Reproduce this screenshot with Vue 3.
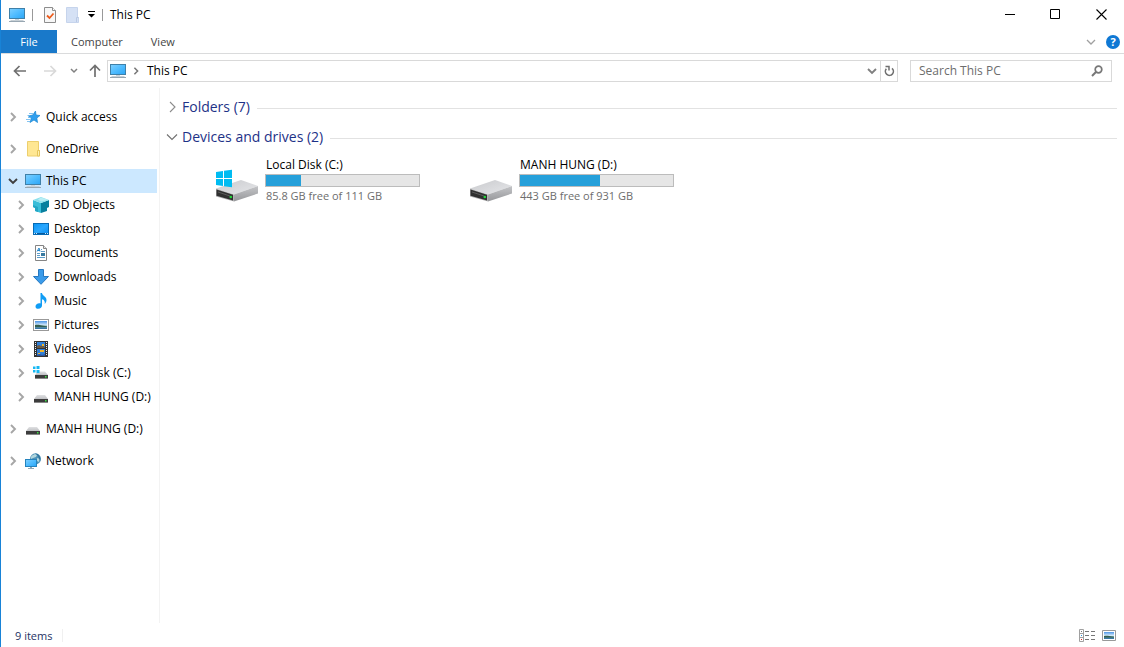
<script setup>
import { ref } from 'vue'

const query = ref('')

const tree = [
  { name: 'Quick access', icon: 'star', group: true },
  { name: 'OneDrive', icon: 'folder', group: true },
  { name: 'This PC', icon: 'pc', group: true, open: true },
  { name: '3D Objects', icon: 'cube', child: true },
  { name: 'Desktop', icon: 'desktop', child: true },
  { name: 'Documents', icon: 'document', child: true },
  { name: 'Downloads', icon: 'download', child: true },
  { name: 'Music', icon: 'music', child: true },
  { name: 'Pictures', icon: 'picture', child: true },
  { name: 'Videos', icon: 'video', child: true },
  { name: 'Local Disk (C:)', icon: 'disk-win', child: true },
  { name: 'MANH HUNG (D:)', icon: 'disk', child: true },
  { name: 'MANH HUNG (D:)', icon: 'disk', group: true },
  { name: 'Network', icon: 'network', group: true },
]

const drives = [
  { name: 'Local Disk (C:)', used: 23, note: '85.8 GB free of 111 GB', windows: true },
  { name: 'MANH HUNG (D:)', used: 52, note: '443 GB free of 931 GB', windows: false },
]
</script>

<template>
  <div class="window">
    <svg class="sprite" aria-hidden="true">
      <defs>
        <linearGradient id="g-screen" x1="0" y1="0" x2="1" y2="1">
          <stop offset="0" stop-color="#7fd0ff" /><stop offset=".5" stop-color="#4fbcff" /><stop offset="1" stop-color="#2ba5f5" />
        </linearGradient>
        <linearGradient id="g-desk" x1="0" y1="0" x2="1" y2="1">
          <stop offset="0" stop-color="#0a95f5" /><stop offset=".5" stop-color="#2ba8ff" /><stop offset="1" stop-color="#0a8df0" />
        </linearGradient>
        <linearGradient id="g-top" x1="0" y1="0" x2="1" y2="1">
          <stop offset="0" stop-color="#c9cacd" /><stop offset="1" stop-color="#e6e7ea" />
        </linearGradient>
        <linearGradient id="g-side" x1="0" y1="0" x2="0" y2="1">
          <stop offset="0" stop-color="#c4c5c8" /><stop offset="1" stop-color="#96979a" />
        </linearGradient>
        <linearGradient id="g-sky" x1="0" y1="0" x2="0" y2="1">
          <stop offset="0" stop-color="#4a94e6" /><stop offset=".5" stop-color="#d4e9fa" /><stop offset=".65" stop-color="#6f9c9a" /><stop offset="1" stop-color="#2d6fa8" />
        </linearGradient>
        <linearGradient id="g-disk" x1="0" y1="0" x2="0" y2="1">
          <stop offset="0" stop-color="#e0e1e3" /><stop offset="1" stop-color="#bfc0c3" />
        </linearGradient>
      </defs>
      <symbol id="i-pc" viewBox="0 0 16 16">
        <rect x=".5" y="1.5" width="15" height="10" fill="url(#g-screen)" stroke="#3f80a8" />
        <path d="M6 12h4v1H6z" fill="#c5d3dc" />
        <path d="M2 13h12l2 2H0z" fill="#c7d0d6" /><path d="M0 14.5h16" stroke="#98a7b2" />
      </symbol>
      <symbol id="i-star" viewBox="0 0 16 16">
        <path d="M10.500 2 11 6 15 6.500 11.800 9 12.500 13.500 9 11 5 13.500 6.300 9.500 3.500 7 7.800 6Z" fill="#2f9fee" stroke="#1784d0" stroke-width=".7" />
        <path d="M4 4.500h4M2.500 6.500H5M3 8.500H6M1 10.500h4.500M2 12.500h3" stroke="#64b5ed" stroke-width=".8" />
      </symbol>
      <symbol id="i-folder" viewBox="0 0 16 16">
        <path d="M2.500.5h11v9h1v5.500h-12z" fill="#ffe793" stroke="#edcf6d" />
        <path d="M12.500 15V9.500h2v5.500z" fill="#fff0b1" stroke="#e5c55c" />
      </symbol>
      <symbol id="i-cube" viewBox="0 0 16 16">
        <path d="M0 3 8 6v10L2 14V11L0 10z" fill="#39bdd8" />
        <path d="M8 6l8-3v7l-2 1v3L8 16z" fill="#087f9e" />
        <path d="M0 3 8 0l8 3-8 3z" fill="#8be0ed" />
        <path d="M5 2.500 8 4.500 15.500 3 8 .5z" fill="#b8edf4" />
        <path d="M2 14l3 1v-5L0 8v2l2 1z" fill="#22a6c4" />
      </symbol>
      <symbol id="i-desktop" viewBox="0 0 16 16">
        <rect x=".5" y="2.500" width="15" height="11" fill="url(#g-desk)" stroke="#076bb5" />
        <path d="M1 12.500h14" stroke="#075a9c" /><path d="M1 12.500h1M3 12.500h1M12 12.500h1M14 12.500h1" stroke="#cbeaff" />
      </symbol>
      <symbol id="i-document" viewBox="0 0 16 16">
        <path d="M2.500.5h8l3 3v12h-11z" fill="#fff" stroke="#858585" /><path d="M10.500.5v3h3" fill="#e8e8e8" stroke="#858585" />
        <path d="M4 6.500 6 3 7 6.500M5 5.500h2" fill="none" stroke="#2688cd" />
        <path d="M8 4.500h1M8 6.500h4M4 8.500h3M4 10.500h3M4 12.500h8" fill="none" stroke="#5d9cc8" />
        <path d="M8 8h4v3H8z" fill="#397aa0" />
      </symbol>
      <symbol id="i-download" viewBox="0 0 16 16">
        <path d="M5.500.5h5v7h5L8 15.300.5 7.500h5z" fill="#3a9bea" stroke="#2678c0" />
      </symbol>
      <symbol id="i-music" viewBox="0 0 16 16">
        <path d="M7.500 0H9c.2 2.500 4.500 3.500 4.500 7 0 1.700-.8 3-1.800 4 .5-2.500-.4-4.300-2.700-4.800V12.500c0 1.900-1.400 3.300-3.800 3.300C3.500 15.800 2.500 14.900 2.500 13.500c0-1.700 1.700-3.200 3.800-3.200.5 0 .9.100 1.200.2z" fill="#109df5" />
      </symbol>
      <symbol id="i-picture" viewBox="0 0 16 16">
        <rect x=".5" y="2.500" width="15" height="11" fill="#fff" stroke="#999" />
        <rect x="2" y="4" width="12" height="8" fill="url(#g-sky)" />
        <path d="M2 8c3-.5 5 0 12 1.500V10H2z" fill="#335f50" />
      </symbol>
      <symbol id="i-video" viewBox="0 0 16 16">
        <path d="M1 0h14v16H1z" fill="#333" />
        <path d="M2.500 1v14M13.500 1v14" stroke="#eee" stroke-width="1" stroke-dasharray="1 1" />
        <path d="M4 1h8v6H4zM4 8h8v7H4z" fill="#2f7fd8" />
        <path d="M4 5 6 4 8 5 10 4 12 6v1H4z" fill="#6b5a45" /><path d="M9 3h2v2H9zM7 9h4v2H7zM5 12h2v1H5z" fill="#efb52e" /><path d="M4 14l3-1 2 1 3-1v2H4z" fill="#2e569d" />
      </symbol>
      <symbol id="i-disk" viewBox="0 0 16 16">
        <path d="M4 6h8l3 4H1z" fill="url(#g-disk)" />
        <path d="M1 10h14v4H1z" fill="#3c3c3c" /><path d="M1 13.500h14" stroke="#888" /><path d="M12 11h1.500v1.500H12z" fill="#39dd43" />
      </symbol>
      <symbol id="i-disk-win" viewBox="0 0 16 16">
        <path d="M5 6.500h7l3 3.500H2z" fill="url(#g-disk)" />
        <path d="M2 10h13v4H2z" fill="#3c3c3c" /><path d="M2 13.500h13" stroke="#888" /><path d="M12 11h1.500v1.500H12z" fill="#39dd43" />
        <path d="M0 1.500h2.500V4H0zM3.500 1H6.500v3h-3zM0 5h2.500v2.500H0zM3.500 5h3v3h-3z" fill="#16b8f3" />
      </symbol>
      <symbol id="i-network" viewBox="0 0 16 16">
        <circle cx="10.500" cy="5.800" r="5.500" fill="#4c92b8" />
        <path d="M7 2.500 10 1l2 1-1 2-3 1-2 1C5.500 5 6 3.500 7 2.500zM12 5l3 1-1 3-2-1z" fill="#b2d6dd" />
        <path d="M10 .5c5 0 6 5 5 8-1-3-1-6-5-8z" fill="#2f7098" />
        <rect x=".5" y="6.500" width="11" height="7" fill="url(#g-screen)" stroke="#2583bd" /><path d="M5 14h2v1h2v1H3v-1h2z" fill="#93a9b6" />
      </symbol>
      <symbol id="i-right" viewBox="0 0 8 10"><path d="M2 1l4 4-4 4" fill="none" stroke="currentColor" stroke-width="1.900" /></symbol>
      <symbol id="i-down" viewBox="0 0 10 8"><path d="M1 2l4 4 4-4" fill="none" stroke="currentColor" stroke-width="1.900" /></symbol>
    </svg>

    <header class="titlebar">
      <svg class="icon"><use href="#i-pc" /></svg>
      <span class="bar"></span>
      <div class="quick">
        <button aria-label="Properties">
          <svg width="13" height="16" viewBox="0 0 13 16">
            <path d="M.5.5h8l3 3v12H.5z" fill="#f7f7f7" stroke="#8d8d8d" /><path d="M8.500.5v3h3" fill="#fff" stroke="#8d8d8d" />
            <path d="M3 8.500 5.500 11 9.500 6.500" fill="none" stroke="#ec5b1c" stroke-width="1.800" />
          </svg>
        </button>
        <button aria-label="New folder">
          <svg width="13" height="16" viewBox="0 0 13 16">
            <path d="M.5.5h11v10h1v5H.5z" fill="#d5e1f5" stroke="#c6d4ec" /><path d="M10.500 15v-4.500h2" fill="none" stroke="#b9c9e4" />
          </svg>
        </button>
        <button class="customize" aria-label="Customize Quick Access Toolbar">
          <svg width="7" height="7" viewBox="0 0 7 7"><path d="M0 0h7v1H0zM0 3h7L3.500 6.500z" fill="#000" /></svg>
        </button>
      </div>
      <span class="bar"></span>
      <h1>This PC</h1>
      <div class="controls">
        <button aria-label="Minimize"><svg width="11" height="11" viewBox="0 0 11 11"><path d="M1 5.500h10" stroke="#000" /></svg></button>
        <button aria-label="Maximize"><svg width="11" height="11" viewBox="0 0 11 11"><path d="M.5.5h9v9h-9z" fill="none" stroke="#000" /></svg></button>
        <button aria-label="Close"><svg width="11" height="11" viewBox="0 0 11 11"><path d="M.5.5l10 10M10.500.5l-10 10" stroke="#000" stroke-width="1.100" /></svg></button>
      </div>
    </header>

    <nav class="ribbon" aria-label="Ribbon">
      <button class="file">File</button>
      <button>Computer</button>
      <button>View</button>
      <span class="spacer"></span>
      <button class="expand" aria-label="Expand the ribbon">
        <svg width="10" height="8" viewBox="0 0 10 8"><path d="M1 2l4 4 4-4" fill="none" stroke="#a0a0a0" stroke-width="1.300" /></svg>
      </button>
      <button class="help" aria-label="Help">?</button>
    </nav>

    <div class="navbar">
      <div class="history">
        <button aria-label="Back"><svg width="14" height="12" viewBox="0 0 14 12"><path d="M6.500 1 1.500 6l5 5M1.500 6H13" fill="none" stroke="#707070" stroke-width="1.700" /></svg></button>
        <button aria-label="Forward"><svg width="14" height="12" viewBox="0 0 14 12"><path d="M7.500 1l5 5-5 5M12.500 6H1" fill="none" stroke="#d9d9d9" stroke-width="1.700" /></svg></button>
        <button class="recent" aria-label="Recent locations"><svg width="8" height="6" viewBox="0 0 8 6"><path d="M1 1l3 3 3-3" fill="none" stroke="#808080" stroke-width="1.500" /></svg></button>
        <button class="up" aria-label="Up"><svg width="12" height="14" viewBox="0 0 12 14"><path d="M1 6.500 6 1.500l5 5M6 1.500V13" fill="none" stroke="#707070" stroke-width="1.700" /></svg></button>
      </div>
      <div class="address">
        <svg class="icon"><use href="#i-pc" /></svg>
        <svg class="sep"><use href="#i-right" /></svg>
        <a href="#this-pc">This PC</a>
        <button class="drop" aria-label="Previous locations"><svg width="10" height="8"><use href="#i-down" /></svg></button>
        <button class="refresh" aria-label="Refresh">
          <svg width="12" height="12" viewBox="0 0 12 12"><path d="M3.300 3.800A4 4 0 1 0 9 3.300" fill="none" stroke="#707070" stroke-width="1.600" /><path d="M2.500 1.500H6v4" fill="none" stroke="#707070" stroke-width="1.500" /></svg>
        </button>
      </div>
      <form class="search" @submit.prevent>
        <input v-model="query" type="text" placeholder="Search This PC" aria-label="Search This PC">
        <button aria-label="Search">
          <svg width="12" height="12" viewBox="0 0 12 12"><circle cx="7.500" cy="4.500" r="3.300" fill="none" stroke="#777" stroke-width="1.700" /><path d="M5.200 6.800 1 11" stroke="#777" stroke-width="2" /></svg>
        </button>
      </form>
    </div>

    <div class="body">
      <nav class="sidebar" aria-label="Folders">
        <ul>
          <li v-for="(item, i) in tree" :key="i" :class="{ group: item.group, child: item.child, open: item.open }">
            <button class="toggle" :aria-label="'Toggle ' + item.name">
              <svg v-if="item.open" width="10" height="8"><use href="#i-down" /></svg>
              <svg v-else width="8" height="10"><use href="#i-right" /></svg>
            </button>
            <a href="#"><svg class="icon"><use :href="'#i-' + item.icon" /></svg>{{ item.name }}</a>
          </li>
        </ul>
      </nav>

      <main id="this-pc">
        <h2>
          <button><svg width="12" height="12" viewBox="0 0 12 12"><path d="M4 1l5 5-5 5" fill="none" stroke="#8c8c8c" stroke-width="1.100" /></svg>Folders (7)</button>
        </h2>
        <h2>
          <button><svg width="12" height="12" viewBox="0 0 12 12"><path d="M1 3.500l5 5 5-5" fill="none" stroke="#707070" stroke-width="1.100" /></svg>Devices and drives (2)</button>
        </h2>
        <div class="drives">
          <article v-for="drive in drives" :key="drive.name" class="drive">
            <svg width="44" height="36" viewBox="0 0 44 36">
              <path d="M1 22.500 26 14l17 6-24 8.500z" fill="url(#g-top)" />
              <path d="M19 28.500 43 20v7.500L19 35.500z" fill="url(#g-side)" />
              <path d="M1 22.500l18 6v7L1 30.500z" fill="#b2b2b4" />
              <path d="M1.500 23.500 18 28.800v5.800L1.500 29.800z" fill="#303030" /><path d="M3 26l12 4" stroke="#666" stroke-width=".8" />
              <circle cx="15.800" cy="31" r="1.300" fill="#22d83b" />
              <path v-if="drive.windows" d="M1 6l7-1v7H1zM9 4.800 17 3.700V12H9zM1 13h7v7l-7-1zM9 13h8v8.300l-8-1.100z" fill="#00bcf2" />
            </svg>
            <div class="info">
              <h3>{{ drive.name }}</h3>
              <div class="capacity" role="meter" aria-valuemin="0" aria-valuemax="100" :aria-valuenow="drive.used" :aria-label="drive.note">
                <div class="used" :style="{ width: drive.used + '%' }"></div>
              </div>
              <p>{{ drive.note }}</p>
            </div>
          </article>
        </div>
      </main>
    </div>

    <footer class="status">
      <span class="count">9 items</span>
      <span class="spacer"></span>
      <button aria-label="Details view">
        <svg width="16" height="13" viewBox="0 0 16 13">
          <path d="M.5.5h4v12h-4zM.5 4.500h4M.5 8.500h4" fill="#fff" stroke="#a0a0a0" />
          <path d="M6 2.500h4M12 2.500h4M6 6.500h4M12 6.500h4M6 10.500h4M12 10.500h4" stroke="#777" />
          <path d="M2 2h1v1H2z" fill="#777" /><path d="M2 6h1v1H2z" fill="#2f95dd" /><path d="M2 10h1v1H2z" fill="#d22" />
        </svg>
      </button>
      <button aria-label="Large icons view">
        <svg width="14" height="11" viewBox="0 0 14 11">
          <path d="M.5.5h13v10H.5z" fill="#fff" stroke="#999" /><path d="M2 2h10v7H2z" fill="url(#g-sky)" /><path d="M2 6c3-.5 5 0 10 1v.5H2z" fill="#335f50" />
        </svg>
      </button>
    </footer>
  </div>
</template>

<style>
html,
body,
#app {
  height: 100%;
}
</style>

<style scoped>
.window {
  box-sizing: border-box;
  display: flex;
  flex-direction: column;
  min-height: 100%;
  border-left: 1px solid #1883d7;
  background: #fff;
  color: #000;
  font: 12px/16px "Open Sans", "Noto Sans", sans-serif;
}
.sprite {
  position: absolute;
  width: 0;
  height: 0;
}
svg {
  display: block;
  flex: none;
}
.icon {
  width: 16px;
  height: 16px;
}
button {
  display: flex;
  align-items: center;
  justify-content: center;
  margin: 0;
  padding: 0;
  border: 0;
  background: none;
  color: inherit;
  font: inherit;
}
a {
  color: inherit;
  text-decoration: none;
}
h1,
h2,
h3,
p,
ul {
  margin: 0;
  padding: 0;
  font: inherit;
}
.spacer {
  flex: 1;
}

.titlebar {
  display: flex;
  align-items: center;
  height: 29px;
  padding: 0 0 1px 8px;
}
.bar {
  width: 1px;
  height: 12px;
  margin-left: 7px;
  background: #999;
}
.quick {
  display: flex;
  gap: 9px;
  margin-left: 11px;
}
.titlebar h1 {
  margin-left: 7px;
}
.controls {
  display: flex;
  align-self: stretch;
  margin-left: auto;
}
.controls button {
  width: 46px;
}

.ribbon {
  display: flex;
  height: 23px;
  padding-right: 4px;
  border-bottom: 1px solid #dadbdc;
  color: #444;
  font-size: 11px;
}
.ribbon button {
  padding: 0 14px;
}
.ribbon .file {
  width: 56px;
  padding: 0;
  background: #1979ca;
  color: #fff;
}
.ribbon .expand {
  padding: 0 10px;
}
.ribbon .help {
  align-self: center;
  width: 14px;
  height: 14px;
  padding: 0;
  border-radius: 50%;
  background: #0f78d4;
  color: #fff;
  font-weight: 700;
}

.navbar {
  display: flex;
  align-items: center;
  height: 34px;
  padding-right: 12px;
}
.history {
  display: flex;
  align-items: center;
  padding-left: 4px;
}
.history button {
  width: 30px;
  height: 24px;
}
.history .recent {
  width: 18px;
}
.history .up {
  width: 24px;
}
.address {
  display: flex;
  align-items: center;
  flex: 1;
  box-sizing: border-box;
  height: 22px;
  border: 1px solid #d9d9d9;
}
.address .icon {
  margin-left: 2px;
}
.address .sep {
  width: 8px;
  height: 8px;
  margin: 0 7px 0 6px;
  color: #777;
}
.address .drop {
  width: 16px;
  margin-left: auto;
  color: #808080;
}
.address .refresh {
  align-self: stretch;
  width: 17px;
  border-left: 1px solid #d9d9d9;
}
.search {
  display: flex;
  box-sizing: border-box;
  width: 202px;
  height: 22px;
  margin-left: 12px;
  border: 1px solid #d9d9d9;
}
.search input {
  flex: 1;
  min-width: 0;
  padding: 0 8px;
  border: 0;
  outline: 0;
  background: none;
  font: inherit;
}
.search input::placeholder {
  color: #6d6d6d;
  opacity: 1;
}
.search button {
  width: 28px;
}

.body {
  display: flex;
  flex: 1;
}
.sidebar {
  width: 158px;
  border-right: 1px solid #f3f3f3;
}
.sidebar ul {
  padding: 9px 2px 0 0;
  list-style: none;
}
.sidebar li {
  display: flex;
  height: 24px;
}
.sidebar .group {
  margin-top: 8px;
}
.sidebar .child {
  padding-left: 8px;
}
.toggle {
  width: 24px;
  color: #a6a6a6;
}
.sidebar .open {
  background: #cce8ff;
}
.open .toggle {
  color: #404040;
}
.sidebar a {
  display: flex;
  align-items: center;
  gap: 5px;
  white-space: nowrap;
}

main {
  flex: 1;
  padding: 5px 7px 0 6px;
}
h2 {
  display: flex;
  align-items: center;
  gap: 7px;
  height: 30px;
  color: #1e3287;
  font-size: 14px;
  line-height: 20px;
}
h2::after {
  flex: 1;
  height: 1px;
  background: #e2e2e2;
  content: "";
}
h2 button {
  gap: 4px;
  padding-bottom: 2px;
}
.drives {
  display: flex;
  flex-wrap: wrap;
  padding: 4px 0 0 49px;
}
.drive {
  display: flex;
  gap: 6px;
  width: 254px;
}
.drive > svg {
  margin-top: 9px;
}
.info {
  width: 155px;
}
.drive h3,
.drive p {
  padding-left: 1px;
}
.drive p {
  margin-top: 1px;
  color: #6d6d6d;
  font-size: 11px;
}
.capacity {
  box-sizing: border-box;
  height: 13px;
  margin-top: 1px;
  border: 1px solid #bcbcbc;
  background: #e6e6e6;
}
.used {
  height: 100%;
  background: #26a0da;
}

.status {
  display: flex;
  align-items: center;
  gap: 7px;
  height: 24px;
  padding: 0 8px 0 14px;
  color: #1e3264;
  font-size: 11px;
}
.count {
  padding: 1px 10px 0 0;
  border-right: 1px solid #f0f0f0;
  line-height: 12px;
}
</style>
